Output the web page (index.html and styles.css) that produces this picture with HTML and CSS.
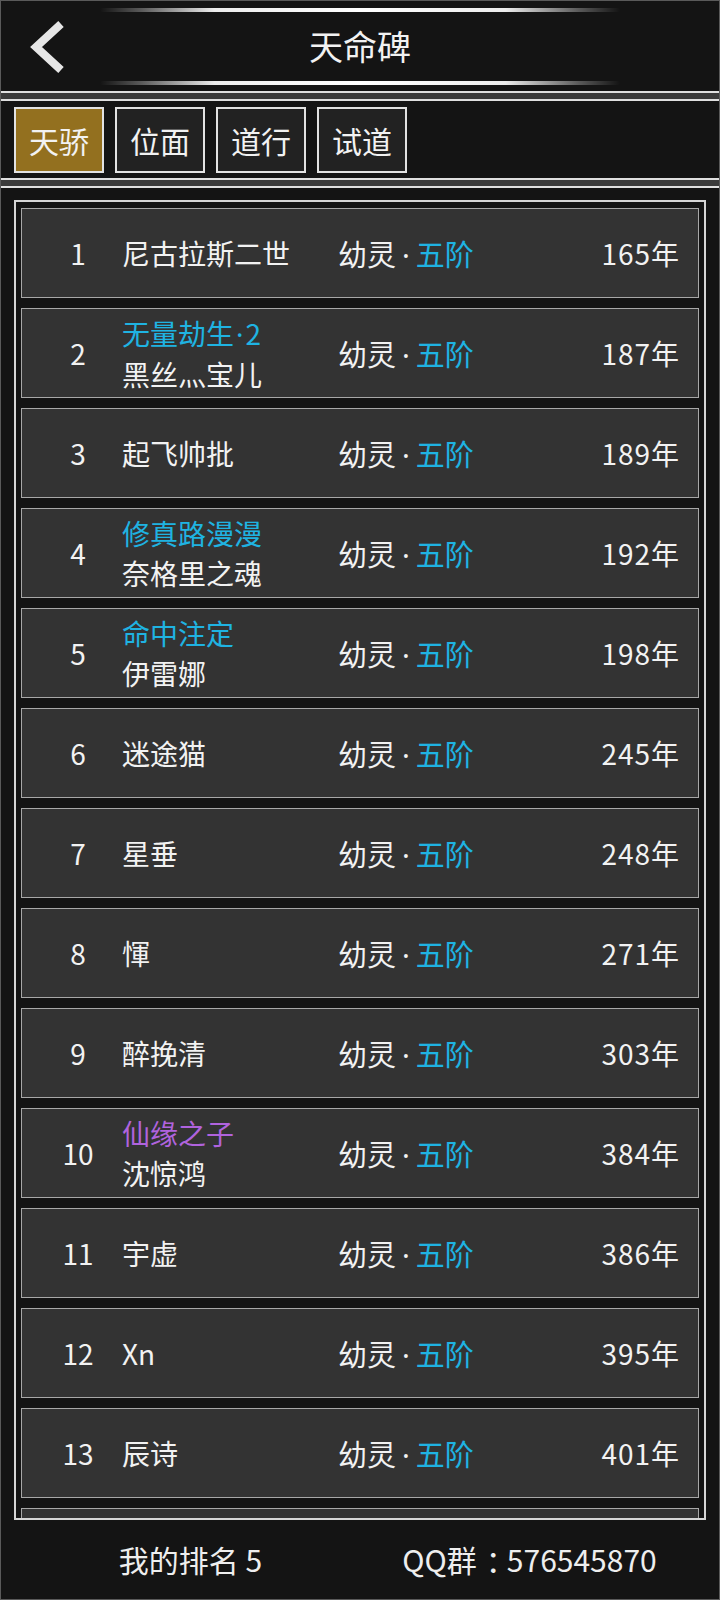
FILE: index.html
```html
<!DOCTYPE html>
<html lang="zh">
<head>
  <meta charset="UTF-8">
  <meta name="viewport" content="width=device-width, initial-scale=1.0">
  <title>天命碑</title>
  <link rel="stylesheet" href="styles.css">
</head>
<body>
  <div class="app">
    <div class="header">
      <div class="glow"></div>
      <div class="title-row">
        <a class="back" href="#">
          <svg width="40" height="54" viewBox="0 0 40 54">
            <polyline points="33,4 8,27 33,50" fill="none" stroke="#e6e6e6" stroke-width="8" stroke-linejoin="miter"/>
          </svg>
        </a>
        <h1>天命碑</h1>
        <span></span>
      </div>
      <div class="glow"></div>
    </div>
    <div class="sep"></div>
    <div class="tabs">
      <button class="tab active">天骄</button>
      <button class="tab">位面</button>
      <button class="tab">道行</button>
      <button class="tab">试道</button>
    </div>
    <div class="sep"></div>

    <div class="board">
      <div class="row">
        <div class="rank">1</div>
        <div class="name"><div>尼古拉斯二世</div></div>
        <div class="realm">幼灵<span class="dot">·</span><span class="tier">五阶</span></div>
        <div class="age">165年</div>
      </div>
      <div class="row">
        <div class="rank">2</div>
        <div class="name"><div class="title blue">无量劫生<span class="pt">·</span>2</div><div>黑丝灬宝儿</div></div>
        <div class="realm">幼灵<span class="dot">·</span><span class="tier">五阶</span></div>
        <div class="age">187年</div>
      </div>
      <div class="row">
        <div class="rank">3</div>
        <div class="name"><div>起飞帅批</div></div>
        <div class="realm">幼灵<span class="dot">·</span><span class="tier">五阶</span></div>
        <div class="age">189年</div>
      </div>
      <div class="row">
        <div class="rank">4</div>
        <div class="name"><div class="title blue">修真路漫漫</div><div>奈格里之魂</div></div>
        <div class="realm">幼灵<span class="dot">·</span><span class="tier">五阶</span></div>
        <div class="age">192年</div>
      </div>
      <div class="row">
        <div class="rank">5</div>
        <div class="name"><div class="title blue">命中注定</div><div>伊雷娜</div></div>
        <div class="realm">幼灵<span class="dot">·</span><span class="tier">五阶</span></div>
        <div class="age">198年</div>
      </div>
      <div class="row">
        <div class="rank">6</div>
        <div class="name"><div>迷途猫</div></div>
        <div class="realm">幼灵<span class="dot">·</span><span class="tier">五阶</span></div>
        <div class="age">245年</div>
      </div>
      <div class="row">
        <div class="rank">7</div>
        <div class="name"><div>星垂</div></div>
        <div class="realm">幼灵<span class="dot">·</span><span class="tier">五阶</span></div>
        <div class="age">248年</div>
      </div>
      <div class="row">
        <div class="rank">8</div>
        <div class="name"><div>惲</div></div>
        <div class="realm">幼灵<span class="dot">·</span><span class="tier">五阶</span></div>
        <div class="age">271年</div>
      </div>
      <div class="row">
        <div class="rank">9</div>
        <div class="name"><div>醉挽清</div></div>
        <div class="realm">幼灵<span class="dot">·</span><span class="tier">五阶</span></div>
        <div class="age">303年</div>
      </div>
      <div class="row">
        <div class="rank">10</div>
        <div class="name"><div class="title purple">仙缘之子</div><div>沈惊鸿</div></div>
        <div class="realm">幼灵<span class="dot">·</span><span class="tier">五阶</span></div>
        <div class="age">384年</div>
      </div>
      <div class="row">
        <div class="rank">11</div>
        <div class="name"><div>宇虚</div></div>
        <div class="realm">幼灵<span class="dot">·</span><span class="tier">五阶</span></div>
        <div class="age">386年</div>
      </div>
      <div class="row">
        <div class="rank">12</div>
        <div class="name"><div>Xn</div></div>
        <div class="realm">幼灵<span class="dot">·</span><span class="tier">五阶</span></div>
        <div class="age">395年</div>
      </div>
      <div class="row">
        <div class="rank">13</div>
        <div class="name"><div>辰诗</div></div>
        <div class="realm">幼灵<span class="dot">·</span><span class="tier">五阶</span></div>
        <div class="age">401年</div>
      </div>
      <!-- next row scrolled below the fold -->
      <div class="row"></div>
    </div>

    <div class="footer">
      <div>我的排名 5</div>
      <div>QQ群<span class="colon">：</span>576545870</div>
    </div>
  </div>
</body>
</html>
```

FILE: styles.css
```css
body {
  margin: 0;
  background-color: #141414;
  font-family: "Noto Sans CJK SC", "Noto Sans", sans-serif;
  color: #f2f2f2;
}
.app {
  width: 720px;
  height: 1600px;
  box-sizing: border-box;
  border: 1px solid #5a5a5a;
  background-color: #141414;
  display: flex;
  flex-direction: column;
}

/* header */
.header {
  height: 90px;
  display: flex;
  flex-direction: column;
  justify-content: space-between;
  padding: 7px 0 6px;
  box-sizing: border-box;
}
.glow {
  width: 520px;
  height: 4px;
  margin: 0 auto;
  border-radius: 2px;
  background: linear-gradient(to right, rgba(255,255,255,0), rgba(255,255,255,0.3) 8%, #ececec 22%, #ffffff 50%, #ececec 78%, rgba(255,255,255,0.3) 92%, rgba(255,255,255,0));
}
.title-row {
  display: grid;
  grid-template-columns: 1fr auto 1fr;
  align-items: center;
}
.back {
  display: flex;
  padding-left: 27px;
}
.title-row h1 {
  margin: 0;
  font-size: 34px;
  font-weight: normal;
  line-height: 54px;
  position: relative;
  top: -1px;
}

.sep {
  height: 6px;
  background-color: #3b3b3b;
  border-top: 2px solid #e0e0e0;
  border-bottom: 2px solid #e0e0e0;
}

/* tabs */
.tabs {
  display: flex;
  gap: 11px;
  padding: 6px 13px 5px;
}
.tab {
  width: 90px;
  height: 66px;
  border: 2px solid #e2e2e2;
  background-color: #222222;
  color: #f2f2f2;
  font-family: inherit;
  font-size: 30px;
  padding: 0;
  cursor: pointer;
}
.tab.active {
  background-color: #93701f;
}

/* ranking list */
.board {
  height: 1320px;
  box-sizing: border-box;
  margin: 12px 13px 0;
  border: 2px solid #d6d6d6;
  padding: 6px 5px;
  overflow: hidden;
  display: flex;
  flex-direction: column;
  gap: 10px;
}
.row {
  flex: none;
  height: 90px;
  box-sizing: border-box;
  border: 1px solid #a8a8a8;
  background-color: #333333;
  display: grid;
  grid-template-columns: 100px 216px 1fr auto;
  align-items: center;
  padding-right: 18px;
  font-size: 28px;
}
.rank {
  padding-left: 12px;
  text-align: center;
}
.name {
  line-height: 40px;
}
.title.blue {
  color: #1fb3e2;
}
.title.purple {
  color: #b063de;
}
.pt {
  font-family: "Noto Sans", sans-serif;
  margin: 0 2px;
}
.realm {
  font-size: 29px;
}
.dot {
  font-family: "Noto Sans", sans-serif;
  margin: 0 6px;
}
.tier {
  color: #1fb3e2;
}
.age {
  letter-spacing: 1px;
}

.footer {
  flex: 1;
  display: grid;
  grid-template-columns: 1fr 1fr;
  align-items: center;
  padding: 0 20px 2px;
  font-size: 30px;
  text-align: center;
  color: #eeeeee;
}
.colon {
  padding-left: 9px;
  letter-spacing: -9px;
}
```
